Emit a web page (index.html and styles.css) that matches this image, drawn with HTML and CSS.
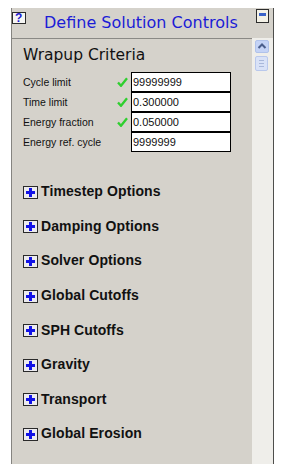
FILE: index.html
```html
<!DOCTYPE html>
<html lang="en">
<head>
    <meta charset="UTF-8">
    <meta name="viewport" content="width=device-width, initial-scale=1.0">
    <title>Define Solution Controls</title>
    <link rel="stylesheet" href="styles.css">
</head>
<body>
    <div class="window">
        <!-- 标题栏 -->
        <div class="titlebar">
            <span class="help">?</span>
            <span class="title">Define Solution Controls</span>
            <span class="minimize"><i></i></span>
        </div>
        <div class="body">
            <div class="content">
                <h2 class="section">Wrapup Criteria</h2>
                <div class="fields">
                    <div class="field">
                        <span class="label">Cycle limit</span>
                        <svg class="check" width="11" height="10" viewBox="0 0 11 10"><path d="M1 5.5 L4 8.8 L10 1.2" /></svg>
                        <span class="value">99999999</span>
                    </div>
                    <div class="field">
                        <span class="label">Time limit</span>
                        <svg class="check" width="11" height="10" viewBox="0 0 11 10"><path d="M1 5.5 L4 8.8 L10 1.2" /></svg>
                        <span class="value">0.300000</span>
                    </div>
                    <div class="field">
                        <span class="label">Energy fraction</span>
                        <svg class="check" width="11" height="10" viewBox="0 0 11 10"><path d="M1 5.5 L4 8.8 L10 1.2" /></svg>
                        <span class="value">0.050000</span>
                    </div>
                    <div class="field">
                        <span class="label">Energy ref. cycle</span>
                        <span class="nocheck"></span>
                        <span class="value">9999999</span>
                    </div>
                </div>
                <div class="groups">
                    <a class="group" href="javascript:;"><svg class="plus" width="15" height="13" viewBox="0 0 15 13"><rect x="0.5" y="0.5" width="14" height="12" /><path d="M3 6.5 H12 M7.5 2 V11" /></svg>Timestep Options</a>
                    <a class="group" href="javascript:;"><svg class="plus" width="15" height="13" viewBox="0 0 15 13"><rect x="0.5" y="0.5" width="14" height="12" /><path d="M3 6.5 H12 M7.5 2 V11" /></svg>Damping Options</a>
                    <a class="group" href="javascript:;"><svg class="plus" width="15" height="13" viewBox="0 0 15 13"><rect x="0.5" y="0.5" width="14" height="12" /><path d="M3 6.5 H12 M7.5 2 V11" /></svg>Solver Options</a>
                    <a class="group" href="javascript:;"><svg class="plus" width="15" height="13" viewBox="0 0 15 13"><rect x="0.5" y="0.5" width="14" height="12" /><path d="M3 6.5 H12 M7.5 2 V11" /></svg>Global Cutoffs</a>
                    <a class="group" href="javascript:;"><svg class="plus" width="15" height="13" viewBox="0 0 15 13"><rect x="0.5" y="0.5" width="14" height="12" /><path d="M3 6.5 H12 M7.5 2 V11" /></svg>SPH Cutoffs</a>
                    <a class="group" href="javascript:;"><svg class="plus" width="15" height="13" viewBox="0 0 15 13"><rect x="0.5" y="0.5" width="14" height="12" /><path d="M3 6.5 H12 M7.5 2 V11" /></svg>Gravity</a>
                    <a class="group" href="javascript:;"><svg class="plus" width="15" height="13" viewBox="0 0 15 13"><rect x="0.5" y="0.5" width="14" height="12" /><path d="M3 6.5 H12 M7.5 2 V11" /></svg>Transport</a>
                    <a class="group" href="javascript:;"><svg class="plus" width="15" height="13" viewBox="0 0 15 13"><rect x="0.5" y="0.5" width="14" height="12" /><path d="M3 6.5 H12 M7.5 2 V11" /></svg>Global Erosion</a>
                </div>
            </div>
            <!-- 滚动条 -->
            <div class="scrollbar">
                <span class="scroll-up"><svg width="14" height="13" viewBox="0 0 14 13"><path d="M3.5 8 L7 4.5 L10.5 8" /></svg></span>
                <span class="thumb"><i></i><i></i><i></i></span>
            </div>
        </div>
    </div>
</body>
</html>
```
FILE: styles.css
```css
/* 页面 */
body{
    margin: 0;
    background-color: #fff;
    font-family: "Liberation Sans", Arial, sans-serif;
}
/* 外框 */
.window{
    box-sizing: border-box;
    width: 263px;
    height: 456px;
    margin: 8px 0 0 11px;
    background-color: #d5d2cb;
    border-left: 1px solid #858480;
    border-right: 1px solid #4e4e4c;
    display: flex;
    flex-direction: column;
}
/* 标题栏 */
.titlebar{
    height: 30px;
    display: flex;
    align-items: flex-start;
    flex-shrink: 0;
}
.help{
    box-sizing: border-box;
    width: 14px;
    height: 12px;
    margin-top: 4px;
    border: 1px solid #2c2c2c;
    background-color: #f6f6f4;
    color: #1b1bd0;
    font-weight: bold;
    font-size: 12px;
    line-height: 10px;
    padding-left: 2px;
}
.title{
    margin: 5px 0 0 18px;
    font-family: "DejaVu Sans", sans-serif;
    font-size: 16px;
    line-height: 20px;
    color: #1c1cd6;
}
.minimize{
    box-sizing: border-box;
    width: 13px;
    height: 14px;
    margin: 1px 4px 0 auto;
    border: 1px solid #2c2c2c;
    background-color: #f3f1e6;
    padding: 3px 2px 0;
}
.minimize i{
    display: block;
    height: 3px;
    background-color: #3b63c8;
}
/* 主体 */
.body{
    flex: 1;
    display: flex;
}
.content{
    width: 240px;
    border-top: 1px solid #8a8985;
    padding-left: 11px;
    box-sizing: border-box;
}
.section{
    margin: 7px 0 8px;
    font-family: "DejaVu Sans", sans-serif;
    font-weight: normal;
    font-size: 15.5px;
    line-height: 18px;
    color: #111;
}
/* 输入行 */
.field{
    display: flex;
    align-items: center;
    height: 20px;
}
.label{
    width: 94px;
    font-size: 10.5px;
    color: #111;
}
.check, .nocheck{
    width: 11px;
    height: 10px;
    margin-right: 3px;
    flex-shrink: 0;
}
.check path{
    fill: none;
    stroke: #2fcf2f;
    stroke-width: 2.3;
}
.value{
    box-sizing: border-box;
    width: 100px;
    height: 20px;
    border: 1px solid #000;
    background-color: #fff;
    font-size: 11px;
    line-height: 18px;
    padding-left: 1px;
    color: #111;
}
/* 折叠项 */
.groups{
    margin-top: 22px;
}
.group{
    display: flex;
    align-items: center;
    height: 34.6px;
    text-decoration: none;
    font-weight: bold;
    font-size: 14px;
    letter-spacing: 0.1px;
    color: #111;
}
.plus{
    margin: 2px 3px 0 0;
    flex-shrink: 0;
}
.plus rect{
    fill: #ecebf0;
    stroke: #2a2a2a;
}
.plus path{
    stroke: #1212e6;
    stroke-width: 3;
}
/* 滚动条 */
.scrollbar{
    width: 21px;
    background-color: #efeeea;
    padding: 2px 0 0 3px;
    box-sizing: border-box;
}
.scroll-up{
    display: block;
    box-sizing: border-box;
    width: 14px;
    height: 13px;
    background-color: #c4d3f6;
    border: 1px solid #b0c2ea;
    border-radius: 2px;
}
.scroll-up svg{
    display: block;
    margin: -1px 0 0 -1px;
}
.scroll-up path{
    fill: none;
    stroke: #4a5e8c;
    stroke-width: 2;
}
.thumb{
    display: flex;
    flex-direction: column;
    align-items: center;
    justify-content: center;
    gap: 2px;
    box-sizing: border-box;
    width: 13px;
    height: 15px;
    margin-top: 3px;
    background-color: #d9e2f7;
    border: 1px solid #b9c8ec;
    border-radius: 2px;
}
.thumb i{
    display: block;
    width: 5px;
    height: 1px;
    background-color: #a9b8da;
}
```
